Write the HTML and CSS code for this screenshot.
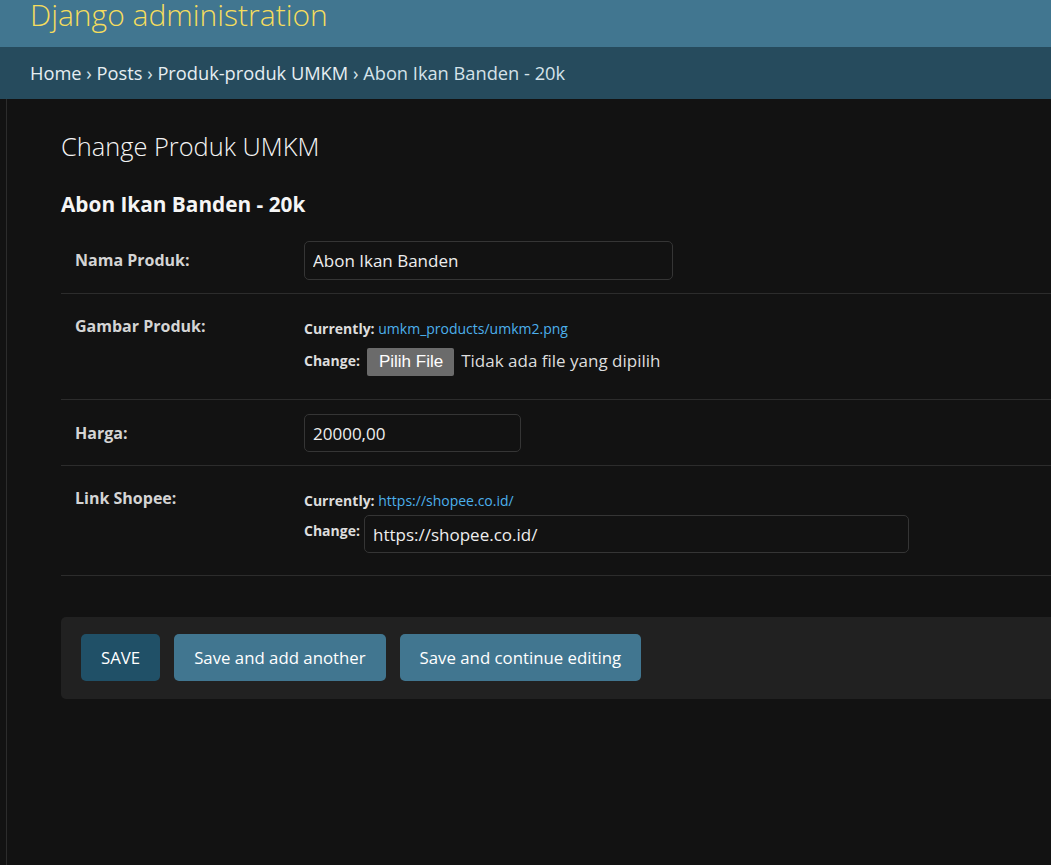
FILE: index.html
```html
<!DOCTYPE html>
<html lang="id">
<head>
<meta charset="utf-8">
<title>Change Produk UMKM | Django site admin</title>
<link rel="stylesheet" href="styles.css">
</head>
<body>
<header class="header">
  <div class="branding">Django administration</div>
</header>
<nav class="breadcrumbs">
  <a href="#">Home</a> › <a href="#">Posts</a> › <a href="#">Produk-produk UMKM</a> › Abon Ikan Banden - 20k
</nav>
<div class="main">
  <div class="nav-toggle"></div>
  <div class="content">
    <h1 class="title">Change Produk UMKM</h1>
    <h2 class="subtitle">Abon Ikan Banden - 20k</h2>
    <form class="form">
      <div class="form-row">
        <label class="label">Nama Produk:</label>
        <div class="field"><input class="input input-name" type="text" value="Abon Ikan Banden"></div>
      </div>
      <div class="form-row form-row-file">
        <label class="label">Gambar Produk:</label>
        <div class="field field-multi">
          <p class="current"><span class="small-label">Currently:</span> <a class="link" href="#">umkm_products/umkm2.png</a></p>
          <p class="change"><span class="small-label">Change:</span> <span class="file-btn">Pilih File</span> <span class="file-text">Tidak ada file yang dipilih</span></p>
        </div>
      </div>
      <div class="form-row form-row-price">
        <label class="label">Harga:</label>
        <div class="field"><input class="input input-price" type="text" value="20000,00"></div>
      </div>
      <div class="form-row form-row-url">
        <label class="label">Link Shopee:</label>
        <div class="field field-multi">
          <p class="current"><span class="small-label">Currently:</span> <a class="link" href="#">https://shopee.co.id/</a></p>
          <p class="change change-url"><span class="small-label">Change:</span> <input class="input input-url" type="text" value="https://shopee.co.id/"></p>
        </div>
      </div>
      <div class="submit-row">
        <button class="btn btn-default" type="button">SAVE</button>
        <button class="btn" type="button">Save and add another</button>
        <button class="btn" type="button">Save and continue editing</button>
      </div>
    </form>
  </div>
</div>
</body>
</html>
```
FILE: styles.css
```css
* { box-sizing: border-box; }
html, body { margin: 0; padding: 0; }
body {
  background: #121212;
  color: #eeeeee;
  font-family: "Open Sans", "Noto Sans", sans-serif;
  font-size: 17px;
  min-height: 865px;
  overflow: hidden;
}
.header {
  background: #417690;
  height: 47px;
  padding: 0 30px;
  overflow: hidden;
}
.branding {
  color: #f5dd5d;
  font-size: 30px;
  font-weight: 300;
  line-height: 30px;
  margin: 0;
}
.breadcrumbs {
  background: #264b5d;
  height: 52px;
  padding: 0 30px;
  line-height: 52px;
  color: #d5e3ea;
  font-size: 18.25px;
  white-space: nowrap;
}
.breadcrumbs a { color: #e6eef2; text-decoration: none; }
.main {
  display: flex;
  min-height: 766px;
}
.nav-toggle {
  width: 7px;
  border-right: 1px solid #2c2c2c;
  flex: none;
}
.content {
  flex: 1;
  padding: 30px 0 0 54px;
}
.title {
  margin: 0;
  font-size: 25.4px;
  font-weight: 300;
  line-height: 34px;
  color: #f5f5f5;
}
.subtitle {
  margin: 28px 0 0;
  font-size: 20.8px;
  font-weight: 700;
  line-height: 26px;
  color: #f5f5f5;
}
.form { margin-top: 11px; }
.form-row {
  display: grid;
  grid-template-columns: 229px 1fr;
  padding: 13px 0 13px 14px;
  border-bottom: 1px solid #2c2c2c;
}
.label {
  font-weight: 700;
  color: #d4d4d4;
  font-size: 16px;
  line-height: 20px;
  padding-top: 9px;
}
.field p { margin: 0; }
.field-multi { padding-top: 13px; }
.input {
  background: #121212;
  border: 1px solid #353535;
  border-radius: 5px;
  color: #eeeeee;
  font-family: inherit;
  font-size: 17px;
  height: 39px;
  padding: 0 8px;
  outline: none;
}
.input-name { width: 369px; }
.input-price { width: 217px; height: 38px; }
.input-url { width: 545px; height: 38px; }
.form-row-file { padding-bottom: 23px; }
.form-row-price { padding-top: 14px; }
.form-row-url { padding-bottom: 22px; }
.small-label {
  font-weight: 700;
  font-size: 14px;
  color: #dddddd;
}
.current {
  font-size: 14px;
  line-height: 18px;
}
.link { color: #4cb0ec; text-decoration: none; }
.change {
  display: flex;
  align-items: flex-start;
  gap: 7px;
  margin-top: 10px !important;
}
.change .small-label { padding-top: 3px; }
.change-url { gap: 4px; margin-top: 5px !important; }
.change-url .small-label { padding-top: 6px; }
.file-btn {
  background: #6b6b6b;
  color: #ffffff;
  font-family: "Liberation Sans", Arial, sans-serif;
  font-size: 17px;
  line-height: 28px;
  padding: 0 11px 0 12px;
  border-radius: 2px;
}
.file-text {
  color: #dddddd;
  font-size: 17px;
  line-height: 26px;
}
.submit-row {
  margin-top: 41px;
  background: #212121;
  border-radius: 5px 0 0 5px;
  padding: 17px 20px 18px;
  display: flex;
  gap: 14px;
}
.btn {
  border: none;
  border-radius: 5px;
  background: #417690;
  color: #ffffff;
  font-family: inherit;
  font-size: 16.8px;
  height: 47px;
  padding: 0 20px;
  cursor: pointer;
}
.btn-default { background: #205067; }
```
